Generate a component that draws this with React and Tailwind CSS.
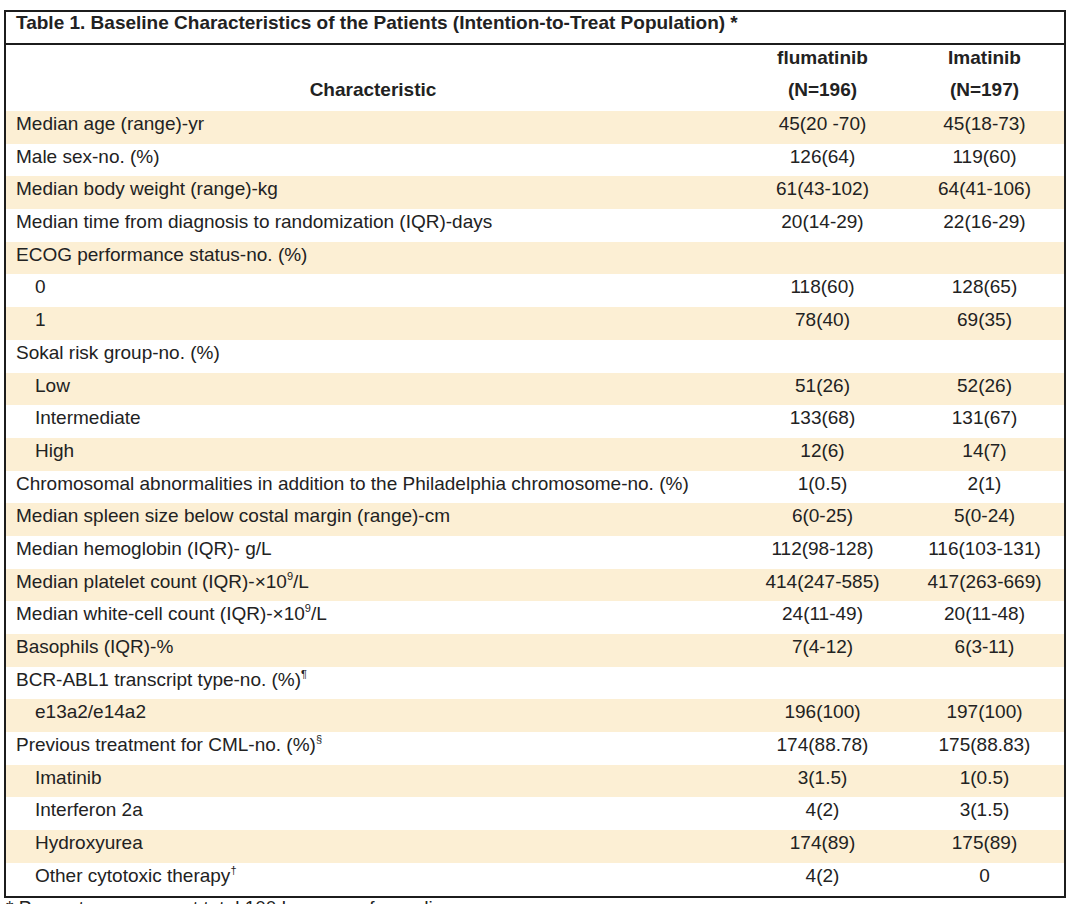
import React from 'react';

const rows = [
  { label: 'Median age (range)-yr', a: '45(20 -70)', b: '45(18-73)' },
  { label: 'Male sex-no. (%)', a: '126(64)', b: '119(60)' },
  { label: 'Median body weight (range)-kg', a: '61(43-102)', b: '64(41-106)' },
  { label: 'Median time from diagnosis to randomization (IQR)-days', a: '20(14-29)', b: '22(16-29)' },
  { label: 'ECOG performance status-no. (%)', a: '', b: '' },
  { label: '0', a: '118(60)', b: '128(65)', indent: true },
  { label: '1', a: '78(40)', b: '69(35)', indent: true },
  { label: 'Sokal risk group-no. (%)', a: '', b: '' },
  { label: 'Low', a: '51(26)', b: '52(26)', indent: true },
  { label: 'Intermediate', a: '133(68)', b: '131(67)', indent: true },
  { label: 'High', a: '12(6)', b: '14(7)', indent: true },
  { label: 'Chromosomal abnormalities in addition to the Philadelphia chromosome-no. (%)', a: '1(0.5)', b: '2(1)' },
  { label: 'Median spleen size below costal margin (range)-cm', a: '6(0-25)', b: '5(0-24)' },
  { label: 'Median hemoglobin (IQR)- g/L', a: '112(98-128)', b: '116(103-131)' },
  { label: 'Median platelet count (IQR)-×10', sup: '9', after: '/L', a: '414(247-585)', b: '417(263-669)' },
  { label: 'Median white-cell count (IQR)-×10', sup: '9', after: '/L', a: '24(11-49)', b: '20(11-48)' },
  { label: 'Basophils (IQR)-%', a: '7(4-12)', b: '6(3-11)' },
  { label: 'BCR-ABL1 transcript type-no. (%)', sup: '¶', a: '', b: '' },
  { label: 'e13a2/e14a2', a: '196(100)', b: '197(100)', indent: true },
  { label: 'Previous treatment for CML-no. (%)', sup: '§', a: '174(88.78)', b: '175(88.83)' },
  { label: 'Imatinib', a: '3(1.5)', b: '1(0.5)', indent: true },
  { label: 'Interferon 2a', a: '4(2)', b: '3(1.5)', indent: true },
  { label: 'Hydroxyurea', a: '174(89)', b: '175(89)', indent: true },
  { label: 'Other cytotoxic therapy', sup: '†', a: '4(2)', b: '0', indent: true },
];

const Row = ({ row, shaded }) => (
  <div
    className={`grid grid-cols-[734px_165px_1fr] h-[32.7px] pt-[3px] leading-[19px] ${shaded ? 'bg-[#fcefd4]' : 'bg-white'}`}
  >
    <div className={row.indent ? 'pl-[29px]' : 'pl-[10px]'}>
      {row.label}
      {row.sup && <sup className="text-[11px] -top-[8px]">{row.sup}</sup>}
      {row.after}
    </div>
    <div className="text-center">{row.a}</div>
    <div className="text-center">{row.b}</div>
  </div>
);

export default function App() {
  return (
    <div className="bg-white w-[1080px] h-[904px] overflow-hidden pt-[10px] pl-[4px] font-['Liberation_Sans',Arial,sans-serif] text-[19px] text-[#222]">
      <div className="w-[1062px] border-2 border-[#1c1c1c]">
        <div className="h-[33px] pt-[1px] pl-[10px] font-bold leading-[20px] border-b-2 border-[#1c1c1c]">
          Table 1. Baseline Characteristics of the Patients (Intention-to-Treat Population) *
        </div>
        <div className="grid grid-cols-[734px_165px_1fr] h-[66px] pt-[2px] font-bold leading-[22px]">
          <div className="flex flex-col items-center gap-[10px]">
            <span>&nbsp;</span>
            <span>Characteristic</span>
          </div>
          <div className="flex flex-col items-center gap-[10px]">
            <span>flumatinib</span>
            <span>(N=196)</span>
          </div>
          <div className="flex flex-col items-center gap-[10px]">
            <span>Imatinib</span>
            <span>(N=197)</span>
          </div>
        </div>
        {rows.map((row, i) => (
          <Row key={i} row={row} shaded={i % 2 === 0} />
        ))}
      </div>
      <div className="pt-[3px] pl-[2px] leading-[14px]">
        * Percentages may not total 100 because of rounding.
      </div>
    </div>
  );
}
